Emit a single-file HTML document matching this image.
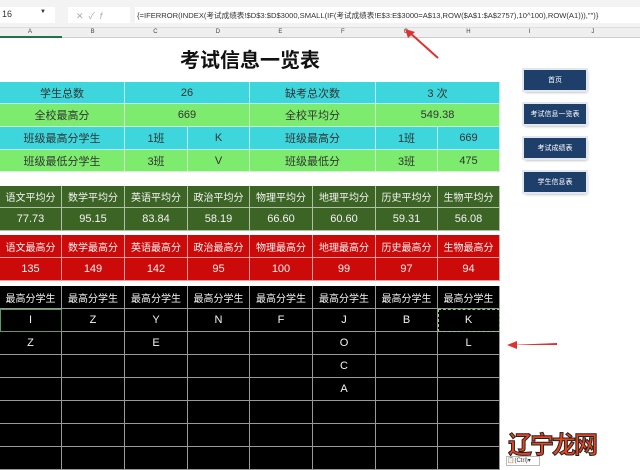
<!DOCTYPE html><html><head><meta charset="utf-8"><style>
*{margin:0;padding:0;box-sizing:border-box}
body{width:640px;height:466px;overflow:hidden;background:#fff;font-family:"Liberation Sans","Noto Sans CJK SC",sans-serif;position:relative}
.a{position:absolute}
.c{position:absolute;display:flex;align-items:center;justify-content:center;font-size:11px;white-space:nowrap;overflow:hidden;border-right:1px solid rgba(255,255,255,.6);border-bottom:1px solid rgba(255,255,255,.6)}
.btn{position:absolute;left:524px;width:62px;height:20px;background:#1f3f6b;color:#fff;font-size:7px;display:flex;align-items:center;justify-content:center;box-shadow:0 0 0 2px #e4e8ee,1px 2px 3px #999}
</style></head><body>
<div class="a" style="left:0;top:0;width:640px;height:28px;background:#f3f3f3;border-bottom:1px solid #ddd"></div>
<div class="a" style="left:0;top:7px;width:55px;height:16px;background:#fff;font-size:9px;padding:2px;color:#333">16<span style="position:absolute;left:40px;font-size:6px">▼</span></div>
<div class="a" style="left:68px;top:7px;width:62px;height:16px;background:#fff;font-size:9px;color:#aaa;padding:2px 8px">✕&nbsp;&nbsp;✓&nbsp;&nbsp;<i>f</i></div>
<div class="a" style="left:135px;top:7px;width:505px;height:16px;background:#fff;font-size:7.6px;color:#333;padding:3px 2px;white-space:nowrap">{=IFERROR(INDEX(考试成绩表!$D$3:$D$3000,SMALL(IF(考试成绩表!E$3:E$3000=A$13,ROW($A$1:$A$2757),10^100),ROW(A1))),"")}</div>
<div class="a" style="left:0;top:28px;width:640px;height:10px;background:#efefef;border-bottom:1px solid #ccc;font-size:6px;color:#444"></div>
<div class="a" style="left:0;top:36px;width:62px;height:2px;background:#217346"></div>
<div id="hdr"></div>
<div class="a" style="left:0;top:44px;width:500px;text-align:center;font-size:20px;font-weight:bold;color:#111">考试信息一览表</div>
<svg class="a" style="left:395px;top:28px" width="50" height="32"><path d="M43 30 L14 4" stroke="#e03030" stroke-width="2"/><path d="M10 1 L20 4 L13 10Z" fill="#e03030"/></svg>
<svg class="a" style="left:505px;top:340px" width="55" height="10"><path d="M4 5 L52 3 L52 5 Z" fill="#e03030"/><path d="M2 5 L12 1 L12 9Z" fill="#e03030"/></svg>
<div id="t"></div>
<div class="btn" style="top:70px">首页</div>
<div class="btn" style="top:104px">考试信息一览表</div>
<div class="btn" style="top:138px">考试成绩表</div>
<div class="btn" style="top:172px">学生信息表</div>
<div class="a" style="left:508px;top:425px;font-size:24px;font-weight:bold;color:#e8451f;-webkit-text-stroke:1px #222;letter-spacing:-2px">辽宁龙网</div>
<div class="a" style="left:506px;top:456px;width:34px;height:10px;border:1px solid #bbb;font-size:6px;color:#333">📋(Ctrl)▾</div>
<script>
var X=[0,62,125,188,250,313,376,438,500],h='';
'ABCDEFGHIJ'.split('').forEach(function(l,i){h+='<div class="a" style="left:'+(i*62.6+28)+'px;top:29px;font-size:6px;color:#444">'+l+'</div>'});
document.getElementById('hdr').innerHTML=h;
var s='';function c(x1,x2,y1,y2,bg,fg,t,fs){s+='<div class="c" style="left:'+x1+'px;top:'+y1+'px;width:'+(x2-x1)+'px;height:'+(y2-y1)+'px;background:'+bg+';color:'+fg+(fs?';font-size:'+fs+'px':'')+'">'+t+'</div>'}
var cy='#3dd6dc',gr='#7deb6e';
[[82,104,cy,['学生总数','26','缺考总次数','3 次']],[104,127,gr,['全校最高分','669','全校平均分','549.38']]].forEach(function(r){[0,125,250,376].forEach(function(x,i){c(x,[125,250,376,500][i],r[0],r[1],r[2],'#333',r[3][i])})});
[[127,150,cy,['班级最高分学生','1班','K','班级最高分','1班','669']],[150,172,gr,['班级最低分学生','3班','V','班级最低分','3班','475']]].forEach(function(r){var xs=[0,125,188,250,376,438,500];for(var i=0;i<6;i++)c(xs[i],xs[i+1],r[0],r[1],r[2],'#333',r[3][i])});
function row(y1,y2,bg,arr,fs){for(var i=0;i<8;i++)c(X[i],X[i+1],y1,y2,bg,'#f4f4f4',arr[i]||'',fs)}
var sub=['语文','数学','英语','政治','物理','地理','历史','生物'];
row(186,208,'#3b6425',sub.map(function(a){return a+'平均分'}),10);
row(208,231,'#3b6425',['77.73','95.15','83.84','58.19','66.60','60.60','59.31','56.08']);
row(235,258,'#cc0a0a',sub.map(function(a){return a+'最高分'}),10);
row(258,281,'#cc0a0a',['135','149','142','95','100','99','97','94']);
row(286,309,'#000',sub.map(function(){return '最高分学生'}),10);
var R=[['I','Z','Y','N','F','J','B','K'],['Z','','E','','','O','','L'],['','','','','','C','',''],['','','','','','A','',''],[],[],[],[]];
var ys=[309,332,355,378,401,424,447,470];
for(var k=0;k<7;k++)row(ys[k],ys[k+1],'#000',R[k]);
s+='<div class="a" style="left:0;top:309px;width:62px;height:23px;border:1.5px solid #5a9a6a"></div><div class="a" style="left:438px;top:309px;width:62px;height:23px;border:1px dashed #8c8"></div>';
document.getElementById('t').innerHTML=s;
</script>
</body></html>
